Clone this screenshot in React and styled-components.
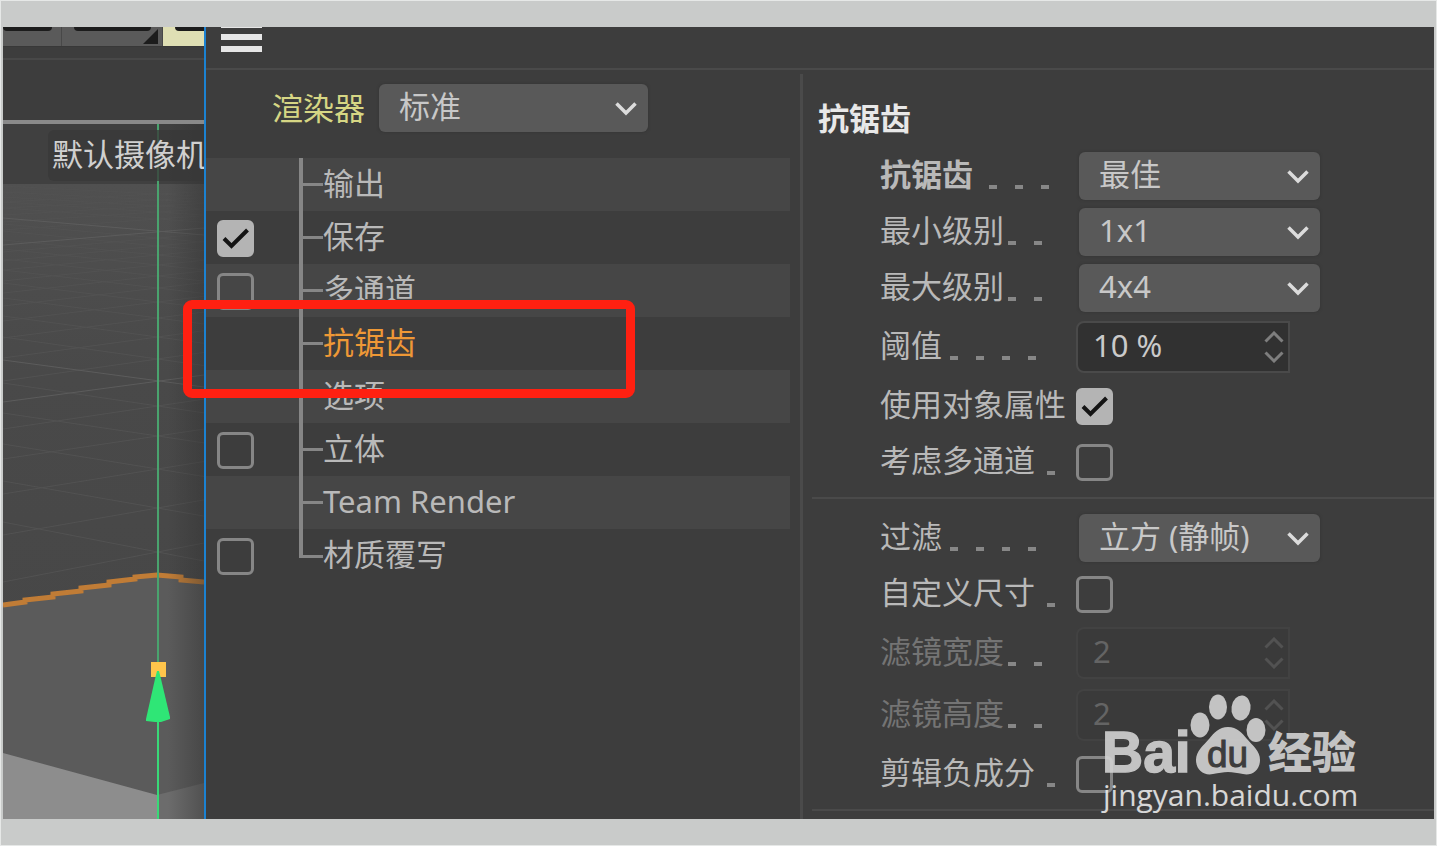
import React from "react";
import styled, { createGlobalStyle } from "styled-components";

const c = {
  frame: "#c9cbca",
  panel: "#3d3d3d",
  stripe: "#464646",
  line: "#4a4a4a",
  control: "#595959",
  text: "#b9b9b9",
  outline: "#868686",
};

const GlobalStyle = createGlobalStyle`
  *, *::before, *::after { box-sizing: border-box; }
  body {
    margin: 0;
    background: ${c.frame};
    color: ${c.text};
    font: 400 31px/40px "Noto Sans", "Noto Sans CJK SC", sans-serif;
  }
  input, select, button { font: inherit; color: inherit; margin: 0; }
`;

const Page = styled.div`
  min-height: 100vh;
  padding: 26px 2px;
  border: 1px solid #e6e8e7;
  display: flex;
`;

const Screen = styled.main`
  position: relative;
  flex: 1;
  display: flex;
  background: ${c.panel};
  overflow: hidden;
`;

/* ---------- 3D viewport ---------- */

const Viewport = styled.section`
  width: 201px;
  flex: none;
  display: flex;
  flex-direction: column;
  overflow: hidden;
`;

const Tools = styled.div`
  height: 20px;
  display: flex;
  border-bottom: 1px solid #383838;
`;

const Tool = styled.button`
  width: ${(p) => p.$w}px;
  flex: none;
  padding: 0 ${(p) => p.$right || 0}px 0 ${(p) => p.$left || 0}px;
  border: 0;
  border-right: 1px solid #484848;
  background: ${(p) => (p.$active ? "#dfdfb4" : "#5a5a5a")};
  display: flex;
  justify-content: space-between;
`;

const ToolGlyph = styled.span`
  flex: 1;
  height: 4px;
  background: #1c1c1c;
  border-radius: 0 0 6px 6px;
`;

const Corner = styled.svg`
  width: 15px;
  height: 15px;
  margin: 2px 0 0 -8px;
`;

const ViewBar = styled.div`
  height: 77px;
  padding-top: 11px;
  border-bottom: 4px solid #8a8a8a;
  &::before {
    content: "";
    display: block;
    height: 2px;
    background: #484848;
  }
`;

const SceneArea = styled.div`
  position: relative;
  flex: 1;
  overflow: hidden;
`;

const Scene = styled.svg`
  display: block;
  width: 201px;
  height: 695px;
`;

const CameraLabel = styled.div`
  position: absolute;
  top: 6px;
  left: 45px;
  padding: 4px 0 7px 4px;
  border-radius: 6px;
  background: rgba(56, 56, 56, 0.75);
  color: #d0d0d0;
  white-space: nowrap;
`;

/* ---------- dialog ---------- */

const Dialog = styled.section`
  flex: 1;
  min-width: 0;
  border-left: 2px solid #1b82d2;
  display: flex;
  flex-direction: column;
`;

const DialogHeader = styled.header`
  height: 43px;
  padding-left: 15px;
  border-bottom: 2px solid ${c.line};
`;

const MenuButton = styled.button`
  display: flex;
  flex-direction: column;
  gap: 6px;
  width: 41px;
  padding: 0;
  border: 0;
  background: none;
`;

const Bar = styled.span`
  height: ${(p) => (p.$cut ? 1 : 6)}px;
  background: #e6e6e6;
`;

const Body = styled.div`
  flex: 1;
  display: grid;
  grid-template-columns: 594px minmax(0, 1fr);
`;

const Sidebar = styled.nav`
  padding-top: 14px;
`;

const RendererRow = styled.div`
  display: flex;
  align-items: center;
  gap: 14px;
  padding-left: 66px;
  margin-bottom: 26px;
`;

const RendererLabel = styled.label`
  color: #d6d684;
`;

const Picker = styled.span`
  display: grid;
  align-items: center;
  width: ${(p) => p.$w}px;
  height: 48px;
  margin-left: ${(p) => p.$inset || 0}px;
  border-radius: 6px;
  background: ${c.control};
  box-shadow: 0 0 2px 1px #383838;
  > * { grid-area: 1 / 1; }
  svg { justify-self: end; margin-right: 10px; pointer-events: none; }
`;

const Select = styled.select`
  appearance: none;
  width: 100%;
  height: 100%;
  padding: 0 40px 4px 20px;
  border: 0;
  background: none;
  color: #c8c8c8;
`;

const Tree = styled.ul`
  list-style: none;
  margin: 0;
  padding: 0;
  width: 584px;
`;

const TreeRow = styled.li`
  display: flex;
  align-items: center;
  height: 53px;
  background: ${c.panel};
  &:nth-child(odd) { background: ${c.stripe}; }
`;

const TreeCheck = styled.div`
  width: 93px;
  padding: 2px 0 0 11px;
  display: flex;
`;

const Branch = styled.span`
  width: 24px;
  height: ${(p) => (p.$last ? 29 : 53)}px;
  align-self: flex-start;
  display: flex;
  align-items: ${(p) => (p.$last ? "flex-end" : "center")};
  border-left: 4px solid ${c.outline};
  &::after {
    content: "";
    flex: 1;
    height: 3px;
    background: ${c.outline};
  }
`;

const TreeLabel = styled.label`
  color: ${(p) => (p.$active ? "#ee9836" : c.text)};
  padding-bottom: 3px;
`;

const CheckWrap = styled.span`
  display: grid;
  width: 37px;
  height: 37px;
  > * { grid-area: 1 / 1; }
  svg { pointer-events: none; }
`;

const CheckInput = styled.input`
  appearance: none;
  width: 37px;
  height: 37px;
  border: 3px solid ${c.outline};
  border-radius: 6px;
  background: transparent;
  &:checked { background: #b4b4b4; border-color: #b4b4b4; }
`;

const Settings = styled.section`
  border-left: 3px solid ${c.line};
  margin-top: 4px;
  padding-top: 24px;
`;

const Heading = styled.h1`
  margin: 0 0 10px 15px;
  font-size: 31px;
  line-height: 40px;
  font-weight: 700;
  color: #e8e8e8;
`;

const Row = styled.div`
  display: flex;
  align-items: center;
  height: ${(p) => (p.$tall ? 62 : 56)}px;
  padding-left: 77px;
  color: ${(p) => (p.$off ? "#747474" : c.text)};
`;

const LabelCell = styled.div`
  width: 196px;
  flex: none;
  display: flex;
  align-items: flex-end;
  padding-bottom: 4px;
`;

const RowLabel = styled.label`
  font-weight: ${(p) => (p.$bold ? 700 : 400)};
  white-space: nowrap;
`;

const Leader = styled.span`
  display: flex;
  gap: 18px;
  padding: 0 0 5px ${(p) => p.$lead}px;
`;

const Dot = styled.i`
  width: 8px;
  height: 4px;
  background: #878787;
`;

const Field = styled.span`
  display: flex;
  width: 214px;
  height: 52px;
  border: 2px solid ${(p) => (p.$off ? "#424242" : c.line)};
  border-radius: 8px 0 0 8px;
  background: ${(p) => (p.$off ? "#3a3a3a" : "#313131")};
  color: ${(p) => (p.$off ? "#646464" : "#cacaca")};
`;

const FieldInput = styled.input`
  flex: 1;
  min-width: 0;
  padding: 0 0 5px 15px;
  border: 0;
  background: none;
`;

const Steps = styled.span`
  display: flex;
  flex-direction: column;
  justify-content: center;
  gap: 8px;
  width: 28px;
  color: ${(p) => (p.$off ? "#525252" : "#7e7e7e")};
`;

const Step = styled.button`
  display: flex;
  padding: 0 4px;
  border: 0;
  background: none;
`;

const Divider = styled.hr`
  height: 2px;
  margin: 7px 0 ${(p) => (p.$end ? 0 : 11)}px 9px;
  border: 0;
  background: ${c.line};
`;

/* ---------- overlays ---------- */

const Highlight = styled.div`
  position: absolute;
  left: 180px;
  top: 273px;
  width: 452px;
  height: 98px;
  border: 9px solid #ff2011;
  border-radius: 9px;
  pointer-events: none;
`;

const Watermark = styled.div`
  position: absolute;
  right: 72px;
  bottom: 6px;
  width: 262px;
  opacity: 0.88;
  pointer-events: none;
  svg { display: block; overflow: visible; }
`;

const Site = styled.div`
  padding-left: 3px;
  font: 400 30px/36px "Open Sans", "Noto Sans", sans-serif;
  color: #ededed;
  white-space: nowrap;
`;

/* ---------- parts ---------- */

function Chevron() {
  return (
    <svg width="24" height="16" viewBox="0 0 24 16" fill="none" stroke="#dcdcdc" strokeWidth="3.500" aria-hidden="true">
      <path d="M2.500 3.500 12 13 21.500 3.500" />
    </svg>
  );
}

function Dropdown({ id, value, w = 241, inset }) {
  return (
    <Picker $w={w} $inset={inset}>
      <Select id={id} defaultValue={value}>
        <option>{value}</option>
      </Select>
      <Chevron />
    </Picker>
  );
}

function Check({ id, on }) {
  const [checked, setChecked] = React.useState(!!on);
  return (
    <CheckWrap>
      <CheckInput type="checkbox" id={id} checked={checked} onChange={() => setChecked(!checked)} />
      {checked && (
        <svg width="37" height="37" viewBox="0 0 37 37" fill="none" stroke="#141414" strokeWidth="4" aria-hidden="true">
          <path d="M7 18.500 14.500 26 30.500 10" />
        </svg>
      )}
    </CheckWrap>
  );
}

function NumberField({ id, value, off }) {
  return (
    <Field $off={off}>
      <FieldInput id={id} defaultValue={value} readOnly={off} />
      <Steps $off={off}>
        <Step aria-label="+">
          <svg width="20" height="12" viewBox="0 0 20 12" fill="none" stroke="currentColor" strokeWidth="3"><path d="M1.500 10.500 10 2l8.500 8.500" /></svg>
        </Step>
        <Step aria-label="-">
          <svg width="20" height="12" viewBox="0 0 20 12" fill="none" stroke="currentColor" strokeWidth="3"><path d="M1.500 1.500 10 10l8.500-8.500" /></svg>
        </Step>
      </Steps>
    </Field>
  );
}

function Setting({ id, label, dots = 0, lead = 0, bold, off, tall, children }) {
  return (
    <Row $tall={tall} $off={off}>
      <LabelCell>
        <RowLabel htmlFor={id} $bold={bold}>{label}</RowLabel>
        <Leader $lead={lead}>
          {Array.from({ length: dots }, (_, i) => <Dot key={i} />)}
        </Leader>
      </LabelCell>
      {children}
    </Row>
  );
}

/* Floor grid: each entry is a crossing height on the axis and how far the two lines spread at the left edge. */
const crossings = [
  [70, 8], [76, 8], [82, 9], [88, 10], [95, 11], [114, 14], [122, 15], [131, 15],
  [141, 16], [152, 17], [164, 18], [178, 19], [194, 20], [213, 21], [235, 22],
  [282, 23], [312, 23], [345, 25], [384, 27], [428, 30],
];

function SceneDrawing() {
  return (
    <Scene viewBox="0 0 201 695" aria-hidden="true">
      <defs>
        <linearGradient id="floor" x1="0" y1="0" x2="0" y2="1">
          <stop offset="0" stopColor="#505050" />
          <stop offset="0.300" stopColor="#494949" />
          <stop offset="1" stopColor="#464646" />
        </linearGradient>
        <linearGradient id="shade" x1="0" y1="0" x2="1" y2="0">
          <stop offset="0" stopColor="#303030" stopOpacity="0" />
          <stop offset="1" stopColor="#303030" stopOpacity="0.450" />
        </linearGradient>
      </defs>
      <rect width="201" height="695" fill="#404040" />
      <rect y="60" width="201" height="635" fill="url(#floor)" />
      <g stroke="#525252" fill="none">
        {crossings.map(([y, s]) => (
          <path key={y} d={`M0 ${y - s}L201 ${y + s * 0.3}M0 ${y + s}L201 ${y - s * 0.3}`} />
        ))}
      </g>
      <path d="M0 94 201 111M0 121 201 104M0 236 201 263M0 278 201 251" stroke="#5c5c5c" fill="none" />
      <path d="M0 481 154 451 201 458V695H0Z" fill="#5b5b5b" />
      <path d="M0 629 154 671V695H0Z" fill="#8d8d8d" />
      <path d="M154 671 201 659V695H154Z" fill="#6c6c6c" />
      <path d="M0 481 22 478 22 476 50 473 50 470 78 467 78 464 106 461 106 458 132 455 132 453 154 451 178 453 178 456 201 458" fill="none" stroke="#c07c36" strokeWidth="5" />
      <rect x="165" width="36" height="695" fill="url(#shade)" />
      <path d="M155 0V545" stroke="#4aa36e" strokeWidth="2" />
      <path d="M155 560V695" stroke="#39d877" strokeWidth="2" />
      <rect x="148" y="538" width="15" height="15" fill="#ffc54b" />
      <path d="M154 547h2l2 8 9 38v2l-9 3h-6l-9-1v-2l9-40Z" fill="#2fe676" />
    </Scene>
  );
}

const tree = [
  { label: "输出" },
  { label: "保存", check: true, on: true },
  { label: "多通道", check: true },
  { label: "抗锯齿", active: true },
  { label: "选项" },
  { label: "立体", check: true },
  { label: "Team Render" },
  { label: "材质覆写", check: true },
];

export default function App() {
  return (
    <>
      <GlobalStyle />
      <Page>
        <Screen>
          <Viewport>
            <Tools>
              <Tool $w={59} $right={9} aria-label="工具"><ToolGlyph /></Tool>
              <Tool $w={101} $left={12} $right={4} aria-label="工具">
                <ToolGlyph />
                <Corner viewBox="0 0 15 15"><path d="M15 0V15H0Z" fill="#1c1c1c" /></Corner>
              </Tool>
              <Tool $w={60} $left={12} $active aria-label="工具"><ToolGlyph /></Tool>
            </Tools>
            <ViewBar />
            <SceneArea>
              <CameraLabel>默认摄像机</CameraLabel>
              <SceneDrawing />
            </SceneArea>
          </Viewport>

          <Dialog>
            <DialogHeader>
              <MenuButton aria-label="菜单">
                <Bar $cut />
                <Bar />
                <Bar />
              </MenuButton>
            </DialogHeader>
            <Body>
              <Sidebar>
                <RendererRow>
                  <RendererLabel htmlFor="renderer">渲染器</RendererLabel>
                  <Dropdown id="renderer" value="标准" w={269} />
                </RendererRow>
                <Tree>
                  {tree.map((t, i) => (
                    <TreeRow key={t.label}>
                      <TreeCheck>{t.check && <Check id={`tree-${i}`} on={t.on} />}</TreeCheck>
                      <Branch $last={i === tree.length - 1} />
                      <TreeLabel as={t.check ? "label" : "span"} htmlFor={t.check ? `tree-${i}` : undefined} $active={t.active}>
                        {t.label}
                      </TreeLabel>
                    </TreeRow>
                  ))}
                </Tree>
              </Sidebar>

              <Settings>
                <Heading>抗锯齿</Heading>
                <Setting id="aa" label="抗锯齿" bold dots={3} lead={16}><Dropdown id="aa" value="最佳" inset={3} /></Setting>
                <Setting id="min" label="最小级别" dots={2} lead={4}><Dropdown id="min" value="1x1" inset={3} /></Setting>
                <Setting id="max" label="最大级别" dots={2} lead={4}><Dropdown id="max" value="4x4" inset={3} /></Setting>
                <Setting id="threshold" label="阈值" dots={4} lead={8} tall><NumberField id="threshold" value="10 %" /></Setting>
                <Setting id="object" label="使用对象属性"><Check id="object" on /></Setting>
                <Setting id="multi" label="考虑多通道" dots={1} lead={12}><Check id="multi" /></Setting>
                <Divider />
                <Setting id="filter" label="过滤" dots={4} lead={8}><Dropdown id="filter" value="立方 (静帧)" inset={3} /></Setting>
                <Setting id="custom" label="自定义尺寸" dots={1} lead={12}><Check id="custom" /></Setting>
                <Setting id="fw" label="滤镜宽度" dots={2} lead={4} tall off><NumberField id="fw" value="2" off /></Setting>
                <Setting id="fh" label="滤镜高度" dots={2} lead={4} tall off><NumberField id="fh" value="2" off /></Setting>
                <Setting id="clip" label="剪辑负成分" dots={1} lead={12}><Check id="clip" /></Setting>
                <Divider $end />
              </Settings>
            </Body>
          </Dialog>

          <Highlight />
          <Watermark>
            <svg width="262" height="86" viewBox="0 0 262 86">
              <g fill="#d6d6d6">
                <text x="2" y="81" fontFamily="Liberation Sans, sans-serif" fontWeight="700" fontSize="57" stroke="#d6d6d6" strokeWidth="1.500">Bai</text>
                <ellipse cx="100" cy="34" rx="9.500" ry="12.500" />
                <ellipse cx="118" cy="16" rx="9" ry="12.500" />
                <ellipse cx="141" cy="17" rx="9.500" ry="12.500" transform="rotate(8 141 17)" />
                <ellipse cx="156" cy="39" rx="9.500" ry="12" />
                <path d="M128 36C137 36 142 42 147 48 153 55 160 60 160 69 160 80 151 85 143 83 137 82 133 81 128 81 123 81 119 82 113 83 104 85 96 79 96 69 96 60 103 55 109 48 114 42 119 36 128 36Z" />
                <text x="168" y="78" fontFamily="Noto Sans CJK SC, sans-serif" fontWeight="900" fontSize="44">经验</text>
              </g>
              <text x="107" y="76" fill="#3d3d3d" stroke="#3d3d3d" strokeWidth="1" fontFamily="Liberation Sans, sans-serif" fontSize="37">du</text>
            </svg>
            <Site>jingyan.baidu.com</Site>
          </Watermark>
        </Screen>
      </Page>
    </>
  );
}
